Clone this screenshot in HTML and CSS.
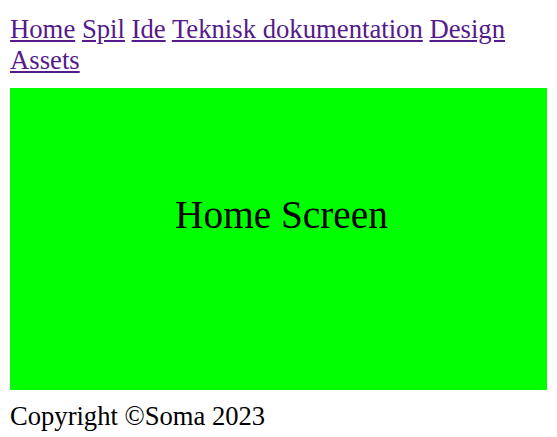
FILE: index.html
```html
<!DOCTYPE html>
<html>
<head>
<meta charset="utf-8">
<link rel="stylesheet" href="styles.css">
</head>
<body>
<nav class="nav">
<a href="#">Home</a>
<a href="#">Spil</a>
<a href="#">Ide</a>
<a href="#">Teknisk dokumentation</a>
<a href="#">Design</a>
<a href="#">Assets</a>
</nav>
<main class="screen">
<p class="screen-title">Home Screen</p>
</main>
<footer class="footer">Copyright ©Soma 2023</footer>
</body>
</html>
```
FILE: styles.css
```css
html, body {
  margin: 0;
  padding: 0;
  background: #fff;
}
body {
  padding: 10px;
  font-family: "Liberation Serif", "Times New Roman", serif;
  font-size: 26.6px;
  color: #000;
}
.nav {
  padding-top: 4px;
  line-height: 30.6px;
  font-size: 26.7px;
}
.nav a {
  color: #551a8b;
  text-decoration: underline;
}
.screen {
  margin-top: 13px;
  height: 302px;
  background: #00ff00;
  box-sizing: border-box;
  padding-top: 104px;
  padding-left: 6px;
  text-align: center;
}
.screen-title {
  margin: 0;
  font-size: 39.3px;
}
.footer {
  margin-top: 11px;
}
```
